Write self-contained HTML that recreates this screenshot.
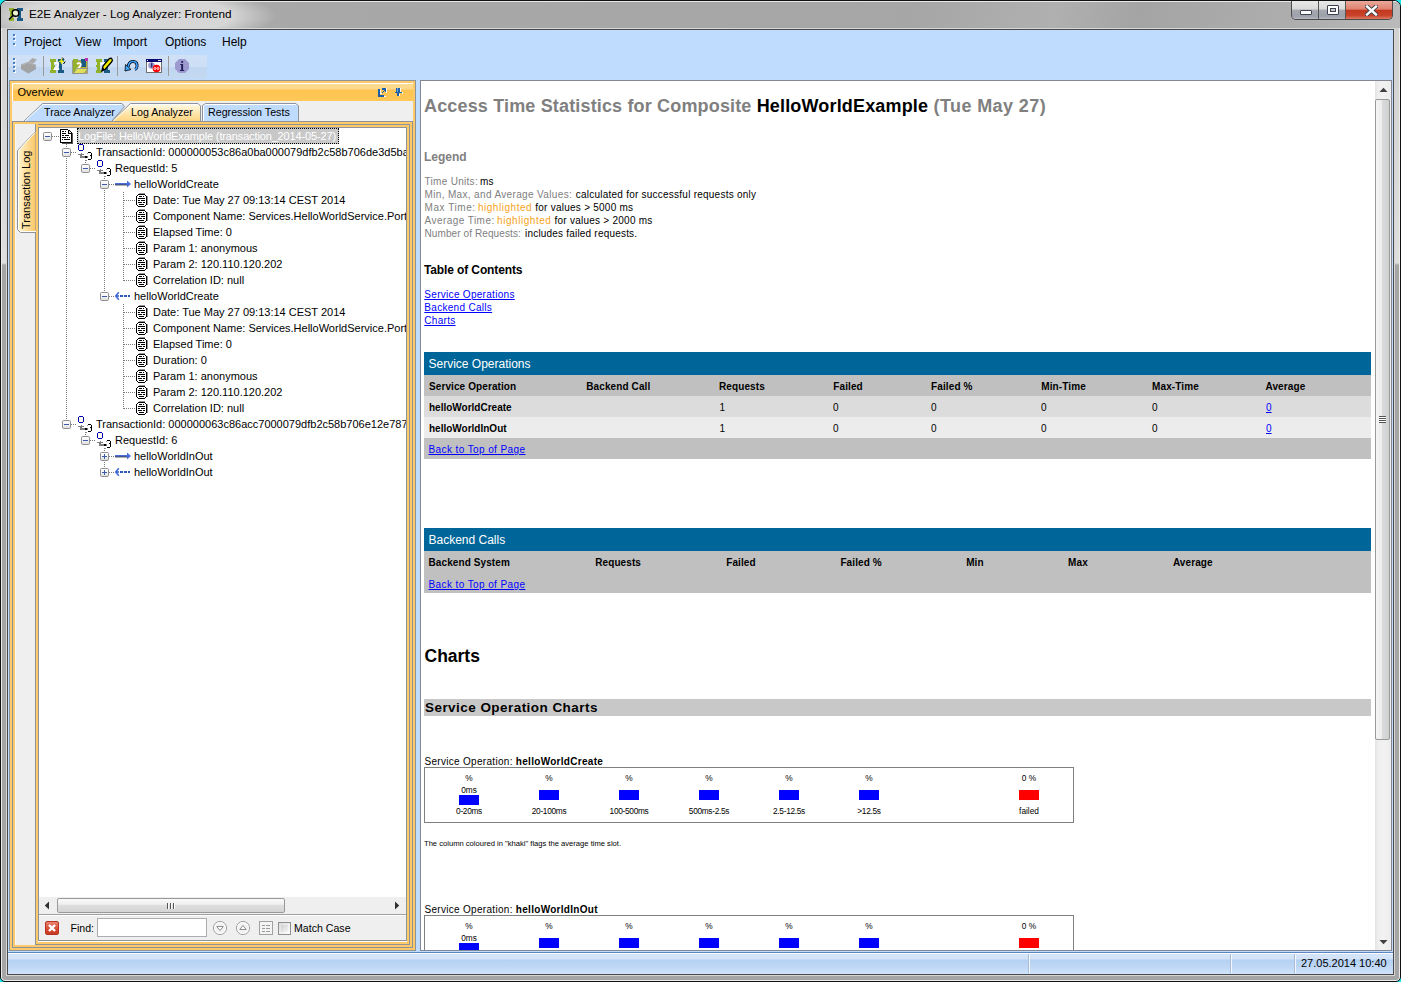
<!DOCTYPE html>
<html><head><meta charset="utf-8">
<style>
*{box-sizing:border-box}
html,body{margin:0;padding:0;width:1401px;height:982px;overflow:hidden;background:#19e3ea;font-family:"Liberation Sans",sans-serif}
.a{position:absolute}
.nw{white-space:nowrap}
#win{left:0;top:0;width:1401px;height:982px;border:1px solid #111;border-radius:7px 7px 5px 5px;box-shadow:inset 0 0 0 1px #ececec;
 background:linear-gradient(#cfcfcf 0,#d6d6d6 120px,#dedede 262px,#a5a5a5 264px,#a5a5a5 100%)}
#tbar{left:1px;top:1px;width:1399px;height:27px;border-radius:6px 6px 0 0;
 background:radial-gradient(ellipse 150px 30px at 125px 15px,#d8d8d8 0,#d6d6d6 70%,rgba(214,214,214,0) 100%),
 linear-gradient(100deg,#b0b0b0 0,#a8a8a8 300px,#a6a6a6 900px,#b0b0b0 1040px,#a4a4a4 1120px,#afafaf 1300px,#bdbdbd 1399px)}
#tbar:before{content:"";position:absolute;left:4px;top:0;right:4px;height:1px;background:#e8e8e8}
#ttxt{left:29px;top:7px;font-size:11.75px;color:#000}
#client{left:7px;top:29px;width:1387px;height:946px;border:1px solid #4a4a4a;background:#bfdbfe;box-shadow:0 0 0 1px #d6d6d6}
.menu{top:35px;font-size:12px;color:#000}
#status{left:8px;top:952px;width:1385px;height:22px;border-top:1px solid #5b86c2;
 background:linear-gradient(#fff 0,#fff 1px,#d5e4f8 1px,#d2e2f8 6px,#b4d0f3 7px,#c0d8f5 14px,#d0e3f9 21px)}
.ssep{top:954px;width:2px;height:19px;border-left:1px solid #a9bdd8;border-right:1px solid #f4f8fd}
#wbtn{left:1291px;top:1px;width:102px;height:19px;border:1px solid #4b4b4b;border-top:none;border-radius:0 0 5px 5px;overflow:hidden;background:#888}
.wb{top:0;height:18px}
.grip{width:2px;height:2px;background:#4b7fc4;box-shadow:1px 1px 0 #fff}
.og{background:#fdc969}
.tr{font-size:11px;line-height:16px;height:16px}
.gl{background:#8e939a}
</style></head><body>
<div id="win" class="a"></div>
<div id="tbar" class="a"></div>
<svg class="a" style="left:8px;top:7px" width="16" height="16" viewBox="0 0 16 16">
  <rect x="1" y="1" width="5" height="3" fill="#93b12a"/><rect x="2" y="4" width="3" height="8" fill="#93b12a"/><rect x="1" y="11" width="5" height="3" fill="#93b12a"/>
  <rect x="9" y="1" width="6" height="3" fill="#1e5a86"/><rect x="10" y="4" width="3" height="8" fill="#1e5a86"/><rect x="9" y="11" width="6" height="3" fill="#1e5a86"/>
  <circle cx="7.5" cy="6" r="3.3" fill="#e8f2d0" stroke="#000" stroke-width="1.4"/><line x1="5" y1="8.5" x2="1" y2="12.5" stroke="#000" stroke-width="1.5"/>
</svg>
<div id="ttxt" class="a nw">E2E Analyzer - Log Analyzer: Frontend</div>
<div id="wbtn" class="a">
  <div class="a wb" style="left:0;width:27px;border-right:1px solid #555;background:linear-gradient(#e9e9e9 0,#d9d9d9 45%,#a6a9b0 50%,#9da1a9 85%,#b7bac0 100%)"></div>
  <div class="a wb" style="left:27px;width:27px;border-right:1px solid #555;background:linear-gradient(#e9e9e9 0,#d9d9d9 45%,#a6a9b0 50%,#9da1a9 85%,#b7bac0 100%)"></div>
  <div class="a wb" style="left:54px;width:47px;background:linear-gradient(#eaa89a 0,#e0826e 45%,#c2391f 52%,#c9432a 80%,#df7a62 100%)"></div>
  <div class="a" style="left:8px;top:9px;width:12px;height:5px;border:1px solid #3c4150;background:#fff;border-radius:1px"></div>
  <div class="a" style="left:35px;top:4px;width:12px;height:10px;border:1px solid #3c4150;background:#fff;border-radius:1px"><div class="a" style="left:2px;top:2px;width:6px;height:4px;border:1px solid #3c4150;background:#c9c9c9"></div></div>
  <svg class="a" style="left:73px;top:4px" width="13" height="11" viewBox="0 0 13 11"><path d="M2 1.5 L11 9.5 M11 1.5 L2 9.5" stroke="#3a3f4a" stroke-width="4.2" stroke-linecap="square"/><path d="M2 1.5 L11 9.5 M11 1.5 L2 9.5" stroke="#fff" stroke-width="2.4" stroke-linecap="square"/></svg>
</div>
<div id="client" class="a"></div>
<!-- menubar -->
<div class="a grip" style="left:13px;top:34px"></div><div class="a grip" style="left:13px;top:38px"></div><div class="a grip" style="left:13px;top:43px"></div>
<div class="a menu nw" style="left:24px">Project</div>
<div class="a menu nw" style="left:75px">View</div>
<div class="a menu nw" style="left:113px">Import</div>
<div class="a menu nw" style="left:165px">Options</div>
<div class="a menu nw" style="left:222px">Help</div>
<!-- toolbar -->
<div class="a" style="left:8px;top:55px;width:199px;height:24px;background:linear-gradient(#d0e1f6 0,#cddff5 50%,#c1d6f0 52%,#c3d8f1 100%)"></div>
<svg class="a" style="left:8px;top:54px" width="200" height="26" viewBox="0 0 200 26">
  <!-- printer (disabled grey) -->
  <path d="M20.4 8 L24.3 4.1 L29 5.4 L25.7 9.2 Z" fill="#a9a9a9"/>
  <path d="M13 10.4 L20.4 7.7 L27.9 10.7 L27.9 13.9 L20.4 18.8 L13 13.9 Z" fill="#a3a3a3"/>
  <path d="M13 13.9 L20.4 18.8 L27.9 13.9 L27.9 15 L20.4 19.6 L13 15 Z" fill="#939393"/>
  <path d="M14 11 L20.4 8.7 L26.5 11" fill="none" stroke="#b8b8b8" stroke-width=".8"/>
  <rect x="35" y="2" width="1" height="20" fill="#9a9a9a"/>
  <!-- E2E new -->
  <g shape-rendering="crispEdges">
    <rect x="42" y="5" width="6" height="3" fill="#93b22c"/><rect x="43" y="8" width="3" height="9" fill="#93b22c"/><rect x="43" y="11" width="4" height="2" fill="#93b22c"/><rect x="42" y="16" width="6" height="3" fill="#93b22c"/>
    <rect x="50" y="5" width="6" height="3" fill="#1b5a82"/><rect x="51" y="8" width="3" height="9" fill="#1b5a82"/><rect x="50" y="16" width="6" height="3" fill="#1b5a82"/>
  </g>
  <path d="M46.3 9.8 Q48.5 7.8 50.2 9.6 Q50.8 11.2 48.8 13 L46.8 15.2 L51.2 15.2" fill="none" stroke="#fff" stroke-width="1.7"/>
  <path d="M53.5 4 L54.4 6.4 L56.8 7.3 L54.4 8.2 L53.5 10.6 L52.6 8.2 L50.2 7.3 L52.6 6.4 Z" fill="#f0ee00"/>
  <path d="M54.2 3.6 L56 5.5 M57.2 7.5 L55.5 10" fill="none" stroke="#000" stroke-width="1"/>
  <!-- E2E open: page x72-88 -->
  <g>
    <path d="M64.5 6.5 H79.5 V19.5 H64.5 Z" fill="#b8b030" stroke="#9a9a9a"/>
    <rect x="65" y="5" width="5" height="14" fill="#93b22c"/>
    <rect x="73" y="5" width="5" height="8" fill="#1b5a82"/>
    <path d="M69 10 Q70.5 8.5 72.5 9.5 Q73.5 11 71.5 13 L69.5 15 L73 15" fill="none" stroke="#fff" stroke-width="1.8"/>
    <path d="M65 19.5 L69 14.5 L80 14.5 L76 19.5 Z" fill="#e0e05a" stroke="#8a8a8a" stroke-width=".8"/>
    <rect x="77" y="4" width="3" height="3" fill="#c030b0"/>
  </g>
  <!-- E2E edit: page x96-111 -->
  <g>
    <rect x="88" y="5" width="6" height="3" fill="#93b22c"/><rect x="89" y="8" width="3" height="10" fill="#93b22c"/><rect x="88" y="11" width="4" height="2" fill="#93b22c"/><rect x="88" y="16" width="6" height="3" fill="#93b22c"/>
    <rect x="96" y="5" width="6" height="3" fill="#1b5a82"/><rect x="97" y="8" width="3" height="10" fill="#1b5a82"/><rect x="96" y="16" width="6" height="3" fill="#1b5a82"/>
    <path d="M92.5 10.5 Q94 8.5 96 9.5" fill="none" stroke="#fff" stroke-width="1.8"/>
    <path d="M94 17 L95 12 L101 5 Q103 3.5 104 5 Q105 6.5 103.5 8 L97.5 15 Z" fill="#f4ee00" stroke="#000" stroke-width="1.3"/>
    <path d="M94 17 L95.2 13.8 L96.8 15.4 Z" fill="#000"/>
  </g>
  <rect x="109" y="2" width="1" height="20" fill="#9a9a9a"/>
  <!-- undo: page x125-138 y61-71 -->
  <g>
    <path d="M120 13 Q121 7 125.5 7.5 Q129.5 8 129 12.5 Q128.5 15 127 15.5" fill="none" stroke="#000" stroke-width="3"/>
    <path d="M120 13 Q121 7 125.5 7.5 Q129.5 8 129 12.5 Q128.5 15 127 15.5" fill="none" stroke="#3aa0ff" stroke-width="1.6"/>
    <path d="M117 17 L117.5 10.5 L123 15.5 Z" fill="#3aa8ff" stroke="#000" stroke-width=".8"/>
  </g>
  <!-- window icon: page x146-162 y59-73 -->
  <g>
    <rect x="138.5" y="5.5" width="15" height="13" fill="#fff" stroke="#6e6e6e"/>
    <rect x="138" y="5" width="16" height="3" fill="#0a0a6e"/>
    <rect x="139" y="6" width="1" height="1" fill="#fff"/><rect x="150" y="6" width="3" height="1" fill="#ddd"/>
    <circle cx="143.5" cy="11.5" r="3.3" fill="#9a98cc"/><rect x="143" y="10" width="1.3" height="3.5" fill="#2a2a6e"/><rect x="143" y="8.7" width="1.3" height="1" fill="#2a2a6e"/>
    <circle cx="148.5" cy="14.5" r="3.8" fill="#ff0000"/><path d="M146 14.5 a1 1 0 1 0 2 0 a1 1 0 1 0 -2 0 M149 14.5 a1 1 0 1 0 2 0 a1 1 0 1 0 -2 0" fill="none" stroke="#fff" stroke-width=".9"/>
  </g>
  <rect x="160" y="2" width="1" height="20" fill="#9a9a9a"/>
  <!-- info octagon: page x175-189 y59-73 -->
  <g>
    <path d="M171 5 L177 5 L181 9 L181 15 L177 19 L171 19 L167 15 L167 9 Z" fill="#9d9ad0"/>
    <rect x="173.3" y="7" width="1.8" height="1.8" fill="#1e1e5a"/>
    <path d="M172.2 10 H175.1 V16 H176.2 V17 H172 V16 H173.2 V11 H172.2 Z" fill="#1e1e5a"/>
  </g>
</svg>
<div class="a grip" style="left:13px;top:58px"></div><div class="a grip" style="left:13px;top:62px"></div><div class="a grip" style="left:13px;top:66px"></div><div class="a grip" style="left:13px;top:70px"></div>

<!-- ===== Overview panel ===== -->
<div class="a" style="left:9px;top:80px;width:407px;height:871px;border:1px solid #8e939a;background:#fdc969"></div>
<div class="a" style="left:12px;top:83px;width:401px;height:18px;border-top:1px solid #fff;border-left:1px solid #fff;background:linear-gradient(#fedc94 0,#fed688 5px,#fec452 6px,#fec553 60%,#ffc858 100%)"></div>
<div class="a nw" style="left:17.5px;top:86px;font-size:11px;color:#000">Overview</div>
<svg class="a" style="left:376px;top:86px" width="12" height="12" viewBox="0 0 12 12" shape-rendering="crispEdges"><path d="M4 4h1v6h5v1h-5z" fill="#fff"/><path d="M2 3h2v8h-2z M2 9h6v2h-6z" fill="#1b5fa8"/><path d="M6 2h4v4h-1v-1h-1v1h-1v1h-1v-1h1v-1h1v-1h-2z" fill="#1b5fa8"/><path d="M10 2h1v5h-1z M5 7h1v1h-1z" fill="#fff"/></svg>
<svg class="a" style="left:394px;top:87px" width="10" height="10" viewBox="0 0 10 10" shape-rendering="crispEdges"><path d="M2 1h4v4h-4z M1 5h7v1h-7z M3 6h2v3h-2z" fill="#1b5fa8"/><path d="M3 1h1v4h-1z" fill="#7aa6dc"/><path d="M6 1h1v4h-1z M8 5h1v2h-1z M5 7h1v2h-1z" fill="#fff"/></svg>
<div class="a" style="left:12px;top:101px;width:401px;height:20px;background:#efefef"></div>
<!-- tab content border -->
<div class="a" style="left:12px;top:121px;width:401px;height:827px;border:1px solid #8e939a;background:#fdc969"></div>
<div class="a" style="left:15px;top:124px;width:20px;height:821px;background:#efefef;border-left:1px solid #f6f6f6"></div>
<!-- tree border -->
<div class="a" style="left:35px;top:124px;width:375px;height:821px;border:1px solid #8e939a;background:#fdc969"></div>
<div class="a" style="left:38px;top:127px;width:369px;height:814px;border:1px solid #8e939a;background:#fff"></div>
<div class="a" style="left:38px;top:941px;width:369px;height:1px;background:#fff"></div>
<!-- top tabs -->
<svg class="a" style="left:12px;top:100px" width="300" height="24" viewBox="0 0 300 24">
  <defs>
    <linearGradient id="tsel" x1="0" y1="0" x2="0" y2="1"><stop offset="0" stop-color="#fffbea"/><stop offset="1" stop-color="#fdd47c"/></linearGradient>
  </defs>
  <path d="M11.5 21.5 L30.5 3.5 L110 3.5 L112.5 6.5 L99.5 21.5 Z" fill="#bfdbfe" stroke="#8e939a" stroke-width="1"/>
  <path d="M13 21 L31 4.5 L109.5 4.5" fill="none" stroke="#fff" stroke-width="1"/>
  <path d="M190.5 21.5 L190.5 5.5 L193.5 3.5 L284 3.5 L286.5 6 L286.5 21.5 Z" fill="#bfdbfe" stroke="#8e939a" stroke-width="1"/>
  <path d="M191.5 21 L191.5 6 L194 4.5 L284 4.5" fill="none" stroke="#fff" stroke-width="1"/>
  <path d="M99.5 21.5 L118.5 3.5 L186 3.5 L188.5 6 L188.5 21.5 Z" fill="url(#tsel)" stroke="#8e939a" stroke-width="1"/>
  <path d="M101.5 21 L119 4.5 L186 4.5" fill="none" stroke="#fff" stroke-width="1"/>
</svg>
<div class="a nw" style="left:44px;top:106px;font-size:10.7px;color:#000">Trace Analyzer</div>
<div class="a nw" style="left:131px;top:106px;font-size:10.7px;color:#000">Log Analyzer</div>
<div class="a nw" style="left:208px;top:106px;font-size:10.7px;color:#000">Regression Tests</div>
<!-- side tab -->
<svg class="a" style="left:15px;top:124px" width="24" height="112" viewBox="0 0 24 112">
  <defs>
    <linearGradient id="sidet" x1="0" y1="0" x2="1" y2="0"><stop offset="0" stop-color="#fff6d2"/><stop offset="1" stop-color="#fcc664"/></linearGradient>
  </defs>
  <path d="M20.5 0 L20.5 7.5 L2.5 26.5 L2.5 105.5 L5.5 108.5 L21 108.5 L21 0 Z" fill="url(#sidet)" stroke="#8e939a" stroke-width="1"/>
  <path d="M20 8.5 L3.5 26.5 L3.5 105 L5.5 107.5 L21 107.5" fill="none" stroke="#fff" stroke-width="1"/>
  <rect x="21" y="0" width="2" height="109" fill="#fdc969"/>
</svg>
<div class="a nw" style="left:20px;top:229px;font-size:11px;color:#000;transform:rotate(-90deg);transform-origin:0 0">Transaction Log</div>
<!-- TREE -->
<div class="a" style="left:0;top:0;width:406px;height:897px;overflow:hidden">
<svg class="a" style="left:39px;top:128px" width="367" height="360" viewBox="0 0 367 360"><style>.dv{stroke:#7a7a7a;stroke-width:1;stroke-dasharray:1 1} .dh{stroke:#7a7a7a;stroke-width:1;stroke-dasharray:1 1}</style><defs>
<linearGradient id="expg" x1="0" y1="0" x2="0" y2="1"><stop offset="0" stop-color="#fff"/><stop offset=".5" stop-color="#f4f4f4"/><stop offset="1" stop-color="#dcdcdc"/></linearGradient>
<g id="expm"><rect x="0.5" y="0.5" width="8" height="8" rx="1.2" fill="url(#expg)" stroke="#8f8f8f"/><rect x="2" y="4" width="5" height="1" fill="#3b5aa8"/></g>
<g id="expp"><rect x="0.5" y="0.5" width="8" height="8" rx="1.2" fill="url(#expg)" stroke="#8f8f8f"/><rect x="2" y="4" width="5" height="1" fill="#3b5aa8"/><rect x="4" y="2" width="1" height="5" fill="#3b5aa8"/></g>
<g id="idoc" shape-rendering="crispEdges"><rect x="1" y="1" width="10" height="12" fill="#fff"/><path d="M0 0h8v1h-8z M0 1h1v13h-1z M1 13h11v1h-11z M11 5h1v8h-1z M8 1h1v4h-1z M8 4h3v1h-3z M9 1h1v1h-1z M10 2h1v1h-1z M11 3h1v2h-1z" fill="#000"/><rect x="9" y="2" width="1" height="2" fill="#ddd"/><path d="M12 4h1v11h-1z M2 14h10v1h-10z" fill="#555"/><path d="M2 2h2v1h-2z M5 2h1v1h-1z M2 4h4v1h-4z M2 6h2v1h-2z M5 6h4v1h-4z M2 8h4v1h-4z M7 8h1v1h-1z M9 8h1v1h-1z M2 10h1v1h-1z M4 10h6v1h-6z" fill="#000"/></g>
<g id="itx" shape-rendering="crispEdges"><path d="M1 0h4v1h-4z M0 1h1v5h-1z M5 1h1v5h-1z M1 6h4v1h-4z" fill="#0000b4"/><rect x="1" y="1" width="4" height="5" fill="#fffbe6"/><path d="M3 9h1v1h-1z M0 10h6v1h-6z M2 11h2v1h-2z M2 12h8v2h-8z" fill="#808080"/><rect x="7" y="12" width="2" height="2" fill="#000"/><path d="M10 8h3v1h-3z M13 9h1v6h-1z M12 11h1v1h-1z M10 15h3v1h-3z" fill="#000"/><path d="M9 9h1v1h-1z M8 16h1v1h-1z" fill="#999"/></g>
<g id="iright"><rect x="0" y="7" width="12" height="2" fill="#4a6fd8"/><rect x="0" y="8.6" width="12" height="0.8" fill="#333"/><path d="M12 4.5 L16 8 L12 11.5 Z" fill="#4a6fd8"/></g>
<g id="ileft"><path d="M3.8 4.2 L0.8 8 L3.8 11.8" fill="none" stroke="#4a6fd8" stroke-width="1.7"/><path d="M1 7.2h3v1.6h-3z" fill="#3a5fc8"/><rect x="5" y="7" width="3" height="2" fill="#2f55c0"/><rect x="9" y="7" width="3" height="2" fill="#2f55c0"/><rect x="13" y="7" width="2" height="2" fill="#2f55c0"/></g>
<g id="iitem" shape-rendering="crispEdges"><rect x="1" y="3" width="9" height="11" fill="#fff"/><path d="M3 1h6v1h-6z M11 4h1v9h-1z" fill="#999"/><path d="M2 2h7v1h-7z M1 3h1v1h-1z M9 3h1v1h-1z M0 4h1v9h-1z M10 4h1v9h-1z M1 13h1v1h-1z M9 13h1v1h-1z M2 14h7v1h-7z" fill="#000"/><path d="M3 4h3v1h-3z M7 4h1v1h-1z M2 6h7v1h-7z M2 8h2v1h-2z M5 8h4v1h-4z M2 10h4v1h-4z M7 10h2v1h-2z M3 12h5v1h-5z" fill="#000"/></g>
</defs><line x1="27.5" y1="16" x2="27.5" y2="297" class="dv"/><line x1="13" y1="8.5" x2="20" y2="8.5" class="dh"/><line x1="46.5" y1="32" x2="46.5" y2="41" class="dv"/><line x1="32" y1="24.5" x2="38" y2="24.5" class="dh"/><line x1="65.5" y1="48" x2="65.5" y2="169" class="dv"/><line x1="51" y1="40.5" x2="57" y2="40.5" class="dh"/><line x1="84.5" y1="64" x2="84.5" y2="153" class="dv"/><line x1="70" y1="56.5" x2="75" y2="56.5" class="dh"/><line x1="85" y1="72.5" x2="96" y2="72.5" class="dh"/><line x1="85" y1="88.5" x2="96" y2="88.5" class="dh"/><line x1="85" y1="104.5" x2="96" y2="104.5" class="dh"/><line x1="85" y1="120.5" x2="96" y2="120.5" class="dh"/><line x1="85" y1="136.5" x2="96" y2="136.5" class="dh"/><line x1="85" y1="152.5" x2="96" y2="152.5" class="dh"/><line x1="84.5" y1="176" x2="84.5" y2="281" class="dv"/><line x1="70" y1="168.5" x2="75" y2="168.5" class="dh"/><line x1="85" y1="184.5" x2="96" y2="184.5" class="dh"/><line x1="85" y1="200.5" x2="96" y2="200.5" class="dh"/><line x1="85" y1="216.5" x2="96" y2="216.5" class="dh"/><line x1="85" y1="232.5" x2="96" y2="232.5" class="dh"/><line x1="85" y1="248.5" x2="96" y2="248.5" class="dh"/><line x1="85" y1="264.5" x2="96" y2="264.5" class="dh"/><line x1="85" y1="280.5" x2="96" y2="280.5" class="dh"/><line x1="46.5" y1="304" x2="46.5" y2="313" class="dv"/><line x1="32" y1="296.5" x2="38" y2="296.5" class="dh"/><line x1="65.5" y1="320" x2="65.5" y2="345" class="dv"/><line x1="51" y1="312.5" x2="57" y2="312.5" class="dh"/><line x1="70" y1="328.5" x2="75" y2="328.5" class="dh"/><line x1="70" y1="344.5" x2="75" y2="344.5" class="dh"/><use href="#expm" x="4" y="4"/><use href="#idoc" x="21" y="1"/><use href="#expm" x="23" y="20"/><use href="#itx" x="39" y="16"/><use href="#expm" x="42" y="36"/><use href="#itx" x="58" y="32"/><use href="#expm" x="61" y="52"/><use href="#iright" x="76" y="48"/><use href="#iitem" x="97" y="64"/><use href="#iitem" x="97" y="80"/><use href="#iitem" x="97" y="96"/><use href="#iitem" x="97" y="112"/><use href="#iitem" x="97" y="128"/><use href="#iitem" x="97" y="144"/><use href="#expm" x="61" y="164"/><use href="#ileft" x="76" y="160"/><use href="#iitem" x="97" y="176"/><use href="#iitem" x="97" y="192"/><use href="#iitem" x="97" y="208"/><use href="#iitem" x="97" y="224"/><use href="#iitem" x="97" y="240"/><use href="#iitem" x="97" y="256"/><use href="#iitem" x="97" y="272"/><use href="#expm" x="23" y="292"/><use href="#itx" x="39" y="288"/><use href="#expm" x="42" y="308"/><use href="#itx" x="58" y="304"/><use href="#expp" x="61" y="324"/><use href="#iright" x="76" y="320"/><use href="#expp" x="61" y="340"/><use href="#ileft" x="76" y="336"/></svg>
<div class="a" style="left:77px;top:128px;width:262px;height:16px;background:#c8c8c8;border:1px dotted #000"></div>
<div class="a nw tr" style="left:78px;top:128px;color:#fff;letter-spacing:-0.14px;">LogFile: HelloWorldExample (transaction_2014-05-27)</div>
<div class="a nw tr" style="left:96px;top:144px;color:#000;">TransactionId: 000000053c86a0ba000079dfb2c58b706de3d5ba</div>
<div class="a nw tr" style="left:115px;top:160px;color:#000;">RequestId: 5</div>
<div class="a nw tr" style="left:134px;top:176px;color:#000;">helloWorldCreate</div>
<div class="a nw tr" style="left:153px;top:192px;color:#000;">Date: Tue May 27 09:13:14 CEST 2014</div>
<div class="a nw tr" style="left:153px;top:208px;color:#000;">Component Name: Services.HelloWorldService.Ports</div>
<div class="a nw tr" style="left:153px;top:224px;color:#000;">Elapsed Time: 0</div>
<div class="a nw tr" style="left:153px;top:240px;color:#000;">Param 1: anonymous</div>
<div class="a nw tr" style="left:153px;top:256px;color:#000;">Param 2: 120.110.120.202</div>
<div class="a nw tr" style="left:153px;top:272px;color:#000;">Correlation ID: null</div>
<div class="a nw tr" style="left:134px;top:288px;color:#000;">helloWorldCreate</div>
<div class="a nw tr" style="left:153px;top:304px;color:#000;">Date: Tue May 27 09:13:14 CEST 2014</div>
<div class="a nw tr" style="left:153px;top:320px;color:#000;">Component Name: Services.HelloWorldService.Ports</div>
<div class="a nw tr" style="left:153px;top:336px;color:#000;">Elapsed Time: 0</div>
<div class="a nw tr" style="left:153px;top:352px;color:#000;">Duration: 0</div>
<div class="a nw tr" style="left:153px;top:368px;color:#000;">Param 1: anonymous</div>
<div class="a nw tr" style="left:153px;top:384px;color:#000;">Param 2: 120.110.120.202</div>
<div class="a nw tr" style="left:153px;top:400px;color:#000;">Correlation ID: null</div>
<div class="a nw tr" style="left:96px;top:416px;color:#000;">TransactionId: 000000063c86acc7000079dfb2c58b706e12e787</div>
<div class="a nw tr" style="left:115px;top:432px;color:#000;">RequestId: 6</div>
<div class="a nw tr" style="left:134px;top:448px;color:#000;">helloWorldInOut</div>
<div class="a nw tr" style="left:134px;top:464px;color:#000;">helloWorldInOut</div>
</div>
<!-- /TREE -->
<!-- tree hscroll + find bar -->
<div class="a" style="left:39px;top:897px;width:367px;height:18px;background:#efefef;border-bottom:1px solid #a0a0a0"></div>
<svg class="a" style="left:44px;top:901px" width="6" height="9" viewBox="0 0 6 9"><path d="M5 0.5 L0.8 4.5 L5 8.5 Z" fill="#303030"/></svg>
<div class="a" style="left:57px;top:898px;width:228px;height:15px;border:1px solid #999;border-radius:2px;background:linear-gradient(#fafafa 0,#f0f0f0 40%,#dedede 50%,#d4d4d4 100%)"></div>
<div class="a" style="left:167px;top:903px;width:1px;height:6px;background:#555;box-shadow:1px 0 #fff,3px 0 #555,4px 0 #fff,6px 0 #555,7px 0 #fff"></div>
<svg class="a" style="left:394px;top:901px" width="6" height="9" viewBox="0 0 6 9"><path d="M1 0.5 L5.2 4.5 L1 8.5 Z" fill="#303030"/></svg>
<div class="a" style="left:39px;top:915px;width:367px;height:25px;background:#efefef;border-top:1px solid #fff"></div>
<div class="a" style="left:45px;top:921px;width:14px;height:14px;border-radius:2px;background:linear-gradient(#ec8370,#d64a33 60%,#c73a23);border:1px solid #b8321d"></div>
<svg class="a" style="left:45px;top:921px" width="14" height="14" viewBox="0 0 14 14"><path d="M4 4 L10 10 M10 4 L4 10" stroke="#fff" stroke-width="2.4"/></svg>
<div class="a nw" style="left:70.5px;top:922px;font-size:10.6px;color:#000">Find:</div>
<div class="a" style="left:97px;top:918px;width:110px;height:19px;background:#fff;border:1px solid #abadb3;border-top-color:#abadb3"></div>
<svg class="a" style="left:212px;top:920px" width="16" height="16" viewBox="0 0 16 16"><circle cx="8" cy="8" r="6.6" fill="#f2f2f2" stroke="#a2a2a2" stroke-width="1"/><circle cx="8" cy="8" r="5.4" fill="none" stroke="#fff" stroke-width=".8"/><path d="M4.8 6.5 H11.2 L8 10.5 Z" fill="#fff" stroke="#8e8e8e" stroke-width="1"/></svg>
<svg class="a" style="left:235px;top:920px" width="16" height="16" viewBox="0 0 16 16"><circle cx="8" cy="8" r="6.6" fill="#f2f2f2" stroke="#a2a2a2" stroke-width="1"/><circle cx="8" cy="8" r="5.4" fill="none" stroke="#fff" stroke-width=".8"/><path d="M4.8 9.5 H11.2 L8 5.5 Z" fill="#fff" stroke="#8e8e8e" stroke-width="1"/></svg>
<svg class="a" style="left:259px;top:921px" width="14" height="14" viewBox="0 0 14 14"><rect x="0.5" y="0.5" width="13" height="13" fill="#f4f4f4" stroke="#a0a0a0"/><path d="M3 4.5h3 M7 4.5h4 M3 7.5h3 M7 7.5h4 M3 10.5h3 M7 10.5h4" stroke="#9a9a9a" stroke-width="1"/></svg>
<div class="a" style="left:278px;top:922px;width:13px;height:13px;border:1px solid #8e8f8f;background:linear-gradient(135deg,#dcdcdc,#fff)"><div class="a" style="left:2px;top:2px;width:7px;height:7px;background:linear-gradient(135deg,#d0d0d0,#f4f4f4)"></div></div>
<div class="a nw" style="left:294px;top:922px;font-size:10.6px;color:#000">Match Case</div>
<!-- RIGHT -->
<div class="a" style="left:420px;top:80px;width:972px;height:871px;border:1px solid #828790;background:#fff"></div>
<!-- CONTENT -->
<div class="a" style="left:421px;top:81px;width:954px;height:869px;overflow:hidden;background:#fff">
<div class="a" style="left:-421px;top:-81px;width:1401px;height:982px">
<div class="a nw" style="left:424px;top:94.76px;font-size:18px;line-height:22px;letter-spacing:0.16px"><b style="color:#808080">Access Time Statistics for Composite </b><b style="color:#000">HelloWorldExample</b><b style="color:#808080;letter-spacing:0.4px"> (Tue May 27)</b></div>
<div class="a nw" style="left:424px;top:149.84px;font-size:12px;line-height:14px;color:#808080"><b>Legend</b></div>
<div class="a nw" style="left:424.5px;top:175.53px;font-size:10px;line-height:12px;letter-spacing:0.3px;color:#808080">Time Units: </div>
<div class="a nw" style="left:480px;top:175.53px;font-size:10px;line-height:12px;"><span style="color:#000;letter-spacing:0.28px">ms</span></div>
<div class="a nw" style="left:424.5px;top:188.53px;font-size:10px;line-height:12px;letter-spacing:0.35px;color:#808080">Min, Max, and Average Values: </div>
<div class="a nw" style="left:575.7px;top:188.53px;font-size:10px;line-height:12px;"><span style="color:#000;letter-spacing:0.24px">calculated for successful requests only</span></div>
<div class="a nw" style="left:424.5px;top:201.53px;font-size:10px;line-height:12px;letter-spacing:0.55px;color:#808080">Max Time: </div>
<div class="a nw" style="left:477.9px;top:201.53px;font-size:10px;line-height:12px;"><span style="color:#f5a31a;letter-spacing:0.54px">highlighted</span><span style="color:#000;letter-spacing:0.25px"> for values &gt; 5000 ms</span></div>
<div class="a nw" style="left:424.5px;top:214.53px;font-size:10px;line-height:12px;letter-spacing:0.45px;color:#808080">Average Time: </div>
<div class="a nw" style="left:497.1px;top:214.53px;font-size:10px;line-height:12px;"><span style="color:#f5a31a;letter-spacing:0.54px">highlighted</span><span style="color:#000;letter-spacing:0.25px"> for values &gt; 2000 ms</span></div>
<div class="a nw" style="left:424.5px;top:227.53px;font-size:10px;line-height:12px;letter-spacing:0.1px;color:#808080">Number of Requests: </div>
<div class="a nw" style="left:525px;top:227.53px;font-size:10px;line-height:12px;"><span style="color:#000;letter-spacing:0.2px">includes failed requests.</span></div>
<div class="a nw" style="left:424px;top:262.84px;font-size:12px;line-height:14px;letter-spacing:-0.12px;color:#000"><b>Table of Contents</b></div>
<div class="a nw" style="left:424.3px;top:288.54px;font-size:10px;line-height:12px;letter-spacing:0.3px;color:#0000ff;text-decoration:underline">Service Operations</div>
<div class="a nw" style="left:424.3px;top:301.54px;font-size:10px;line-height:12px;letter-spacing:0.3px;color:#0000ff;text-decoration:underline">Backend Calls</div>
<div class="a nw" style="left:424.3px;top:314.54px;font-size:10px;line-height:12px;letter-spacing:0.3px;color:#0000ff;text-decoration:underline">Charts</div>
<div class="a" style="left:424px;top:352px;width:947px;height:23px;background:#006699;"></div>
<div class="a nw" style="left:428.5px;top:356.84px;font-size:12px;line-height:14px;color:#fff">Service Operations</div>
<div class="a" style="left:424px;top:375px;width:947px;height:21px;background:#c0c0c0;"></div>
<div class="a" style="left:424px;top:396px;width:947px;height:21px;background:#dcdcdc;"></div>
<div class="a" style="left:424px;top:417px;width:947px;height:21px;background:#ececec;"></div>
<div class="a" style="left:424px;top:438px;width:947px;height:21px;background:#c0c0c0;"></div>
<div class="a nw" style="left:429px;top:380.54px;font-size:10px;line-height:12px;letter-spacing:0.1px;color:#000"><b>Service Operation</b></div>
<div class="a nw" style="left:586.3px;top:380.54px;font-size:10px;line-height:12px;letter-spacing:0.1px;color:#000"><b>Backend Call</b></div>
<div class="a nw" style="left:719px;top:380.54px;font-size:10px;line-height:12px;letter-spacing:0.1px;color:#000"><b>Requests</b></div>
<div class="a nw" style="left:833.3px;top:380.54px;font-size:10px;line-height:12px;letter-spacing:0.1px;color:#000"><b>Failed</b></div>
<div class="a nw" style="left:931.1px;top:380.54px;font-size:10px;line-height:12px;letter-spacing:0.1px;color:#000"><b>Failed %</b></div>
<div class="a nw" style="left:1041.3px;top:380.54px;font-size:10px;line-height:12px;letter-spacing:0.1px;color:#000"><b>Min-Time</b></div>
<div class="a nw" style="left:1152.1px;top:380.54px;font-size:10px;line-height:12px;letter-spacing:0.1px;color:#000"><b>Max-Time</b></div>
<div class="a nw" style="left:1265.5px;top:380.54px;font-size:10px;line-height:12px;letter-spacing:0.1px;color:#000"><b>Average</b></div>
<div class="a nw" style="left:429px;top:401.54px;font-size:10px;line-height:12px;color:#000"><b>helloWorldCreate</b></div>
<div class="a nw" style="left:719.5px;top:401.54px;font-size:10px;line-height:12px;color:#000">1</div>
<div class="a nw" style="left:833px;top:401.54px;font-size:10px;line-height:12px;color:#000">0</div>
<div class="a nw" style="left:931px;top:401.54px;font-size:10px;line-height:12px;color:#000">0</div>
<div class="a nw" style="left:1041px;top:401.54px;font-size:10px;line-height:12px;color:#000">0</div>
<div class="a nw" style="left:1152px;top:401.54px;font-size:10px;line-height:12px;color:#000">0</div>
<div class="a nw" style="left:1266px;top:401.54px;font-size:10px;line-height:12px;color:#0000ff;text-decoration:underline">0</div>
<div class="a nw" style="left:429px;top:422.54px;font-size:10px;line-height:12px;color:#000"><b>helloWorldInOut</b></div>
<div class="a nw" style="left:719.5px;top:422.54px;font-size:10px;line-height:12px;color:#000">1</div>
<div class="a nw" style="left:833px;top:422.54px;font-size:10px;line-height:12px;color:#000">0</div>
<div class="a nw" style="left:931px;top:422.54px;font-size:10px;line-height:12px;color:#000">0</div>
<div class="a nw" style="left:1041px;top:422.54px;font-size:10px;line-height:12px;color:#000">0</div>
<div class="a nw" style="left:1152px;top:422.54px;font-size:10px;line-height:12px;color:#000">0</div>
<div class="a nw" style="left:1266px;top:422.54px;font-size:10px;line-height:12px;color:#0000ff;text-decoration:underline">0</div>
<div class="a nw" style="left:428.5px;top:444.04px;font-size:10px;line-height:12px;letter-spacing:0.4px;color:#0000ff;text-decoration:underline">Back to Top of Page</div>
<div class="a" style="left:424px;top:528px;width:947px;height:23px;background:#006699;"></div>
<div class="a nw" style="left:428.5px;top:532.84px;font-size:12px;line-height:14px;color:#fff">Backend Calls</div>
<div class="a" style="left:424px;top:551px;width:947px;height:21px;background:#c0c0c0;"></div>
<div class="a" style="left:424px;top:572px;width:947px;height:21px;background:#c0c0c0;"></div>
<div class="a nw" style="left:428.5px;top:556.53px;font-size:10px;line-height:12px;letter-spacing:0.1px;color:#000"><b>Backend System</b></div>
<div class="a nw" style="left:595.2px;top:556.53px;font-size:10px;line-height:12px;letter-spacing:0.1px;color:#000"><b>Requests</b></div>
<div class="a nw" style="left:726.2px;top:556.53px;font-size:10px;line-height:12px;letter-spacing:0.1px;color:#000"><b>Failed</b></div>
<div class="a nw" style="left:840.4px;top:556.53px;font-size:10px;line-height:12px;letter-spacing:0.1px;color:#000"><b>Failed %</b></div>
<div class="a nw" style="left:966.2px;top:556.53px;font-size:10px;line-height:12px;letter-spacing:0.1px;color:#000"><b>Min</b></div>
<div class="a nw" style="left:1068.1px;top:556.53px;font-size:10px;line-height:12px;letter-spacing:0.1px;color:#000"><b>Max</b></div>
<div class="a nw" style="left:1172.9px;top:556.53px;font-size:10px;line-height:12px;letter-spacing:0.1px;color:#000"><b>Average</b></div>
<div class="a nw" style="left:428.5px;top:579.03px;font-size:10px;line-height:12px;letter-spacing:0.4px;color:#0000ff;text-decoration:underline">Back to Top of Page</div>
<div class="a nw" style="left:424.5px;top:646.44px;font-size:17.5px;line-height:21px;color:#000"><b>Charts</b></div>
<div class="a" style="left:424px;top:699px;width:947px;height:17px;background:#c8c8c8;"></div>
<div class="a nw" style="left:425px;top:699.82px;font-size:13.5px;line-height:16px;letter-spacing:0.45px;color:#000"><b>Service Operation Charts</b></div>
<div class="a nw" style="left:424.5px;top:755.53px;font-size:10px;line-height:12px;letter-spacing:0.3px;color:#000">Service Operation: <b>helloWorldCreate</b></div>
<div class="a" style="left:424px;top:767px;width:650px;height:56px;border:1px solid #808080"></div>
<div class="a nw" style="left:429px;top:774px;width:80px;text-align:center;font-size:8.3px;line-height:9px;color:#000">%</div>
<div class="a nw" style="left:429px;top:786px;width:80px;text-align:center;font-size:8.3px;line-height:9px;color:#000;letter-spacing:-0.1px">0ms</div>
<div class="a" style="left:459px;top:795px;width:20px;height:10px;background:#0000ff;"></div>
<div class="a nw" style="left:429px;top:807px;width:80px;text-align:center;font-size:8.3px;line-height:9px;color:#000;letter-spacing:-0.3px">0-20ms</div>
<div class="a nw" style="left:509px;top:774px;width:80px;text-align:center;font-size:8.3px;line-height:9px;color:#000">%</div>
<div class="a" style="left:539px;top:790px;width:20px;height:10px;background:#0000ff;"></div>
<div class="a nw" style="left:509px;top:807px;width:80px;text-align:center;font-size:8.3px;line-height:9px;color:#000;letter-spacing:-0.3px">20-100ms</div>
<div class="a nw" style="left:589px;top:774px;width:80px;text-align:center;font-size:8.3px;line-height:9px;color:#000">%</div>
<div class="a" style="left:619px;top:790px;width:20px;height:10px;background:#0000ff;"></div>
<div class="a nw" style="left:589px;top:807px;width:80px;text-align:center;font-size:8.3px;line-height:9px;color:#000;letter-spacing:-0.3px">100-500ms</div>
<div class="a nw" style="left:669px;top:774px;width:80px;text-align:center;font-size:8.3px;line-height:9px;color:#000">%</div>
<div class="a" style="left:699px;top:790px;width:20px;height:10px;background:#0000ff;"></div>
<div class="a nw" style="left:669px;top:807px;width:80px;text-align:center;font-size:8.3px;line-height:9px;color:#000;letter-spacing:-0.3px">500ms-2.5s</div>
<div class="a nw" style="left:749px;top:774px;width:80px;text-align:center;font-size:8.3px;line-height:9px;color:#000">%</div>
<div class="a" style="left:779px;top:790px;width:20px;height:10px;background:#0000ff;"></div>
<div class="a nw" style="left:749px;top:807px;width:80px;text-align:center;font-size:8.3px;line-height:9px;color:#000;letter-spacing:-0.3px">2.5-12.5s</div>
<div class="a nw" style="left:829px;top:774px;width:80px;text-align:center;font-size:8.3px;line-height:9px;color:#000">%</div>
<div class="a" style="left:859px;top:790px;width:20px;height:10px;background:#0000ff;"></div>
<div class="a nw" style="left:829px;top:807px;width:80px;text-align:center;font-size:8.3px;line-height:9px;color:#000;letter-spacing:-0.3px">&gt;12.5s</div>
<div class="a nw" style="left:989px;top:774px;width:80px;text-align:center;font-size:8.3px;line-height:9px;color:#000">0 %</div>
<div class="a" style="left:1019px;top:790px;width:20px;height:10px;background:#ff0000;"></div>
<div class="a nw" style="left:989px;top:807px;width:80px;text-align:center;font-size:8.3px;line-height:9px;color:#000">failed</div>
<div class="a nw" style="left:424px;top:839.17px;font-size:7.6px;line-height:9px;color:#000">The column coloured in "khaki" flags the average time slot.</div>
<div class="a nw" style="left:424.5px;top:903.53px;font-size:10px;line-height:12px;letter-spacing:0.3px;color:#000">Service Operation: <b>helloWorldInOut</b></div>
<div class="a" style="left:424px;top:915px;width:650px;height:56px;border:1px solid #808080"></div>
<div class="a nw" style="left:429px;top:922px;width:80px;text-align:center;font-size:8.3px;line-height:9px;color:#000">%</div>
<div class="a nw" style="left:429px;top:934px;width:80px;text-align:center;font-size:8.3px;line-height:9px;color:#000;letter-spacing:-0.1px">0ms</div>
<div class="a" style="left:459px;top:943px;width:20px;height:10px;background:#0000ff;"></div>
<div class="a nw" style="left:429px;top:955px;width:80px;text-align:center;font-size:8.3px;line-height:9px;color:#000;letter-spacing:-0.3px">0-20ms</div>
<div class="a nw" style="left:509px;top:922px;width:80px;text-align:center;font-size:8.3px;line-height:9px;color:#000">%</div>
<div class="a" style="left:539px;top:938px;width:20px;height:10px;background:#0000ff;"></div>
<div class="a nw" style="left:509px;top:955px;width:80px;text-align:center;font-size:8.3px;line-height:9px;color:#000;letter-spacing:-0.3px">20-100ms</div>
<div class="a nw" style="left:589px;top:922px;width:80px;text-align:center;font-size:8.3px;line-height:9px;color:#000">%</div>
<div class="a" style="left:619px;top:938px;width:20px;height:10px;background:#0000ff;"></div>
<div class="a nw" style="left:589px;top:955px;width:80px;text-align:center;font-size:8.3px;line-height:9px;color:#000;letter-spacing:-0.3px">100-500ms</div>
<div class="a nw" style="left:669px;top:922px;width:80px;text-align:center;font-size:8.3px;line-height:9px;color:#000">%</div>
<div class="a" style="left:699px;top:938px;width:20px;height:10px;background:#0000ff;"></div>
<div class="a nw" style="left:669px;top:955px;width:80px;text-align:center;font-size:8.3px;line-height:9px;color:#000;letter-spacing:-0.3px">500ms-2.5s</div>
<div class="a nw" style="left:749px;top:922px;width:80px;text-align:center;font-size:8.3px;line-height:9px;color:#000">%</div>
<div class="a" style="left:779px;top:938px;width:20px;height:10px;background:#0000ff;"></div>
<div class="a nw" style="left:749px;top:955px;width:80px;text-align:center;font-size:8.3px;line-height:9px;color:#000;letter-spacing:-0.3px">2.5-12.5s</div>
<div class="a nw" style="left:829px;top:922px;width:80px;text-align:center;font-size:8.3px;line-height:9px;color:#000">%</div>
<div class="a" style="left:859px;top:938px;width:20px;height:10px;background:#0000ff;"></div>
<div class="a nw" style="left:829px;top:955px;width:80px;text-align:center;font-size:8.3px;line-height:9px;color:#000;letter-spacing:-0.3px">&gt;12.5s</div>
<div class="a nw" style="left:989px;top:922px;width:80px;text-align:center;font-size:8.3px;line-height:9px;color:#000">0 %</div>
<div class="a" style="left:1019px;top:938px;width:20px;height:10px;background:#ff0000;"></div>
<div class="a nw" style="left:989px;top:955px;width:80px;text-align:center;font-size:8.3px;line-height:9px;color:#000">failed</div>
</div></div>
<!-- /CONTENT -->
<!-- vscroll -->
<div class="a" style="left:1375px;top:81px;width:16px;height:869px;background:linear-gradient(90deg,#e3e3e3 0,#eeeeee 3px,#f2f2f2 8px,#ececec 16px)"></div>
<svg class="a" style="left:1379px;top:87px" width="9" height="6" viewBox="0 0 9 6"><path d="M0.5 5 L4.5 0.8 L8.5 5 Z" fill="#404040"/></svg>
<div class="a" style="left:1375px;top:99px;width:15px;height:641px;border:1px solid #9a9a9a;border-radius:2px;background:linear-gradient(90deg,#f5f5f5 0,#ececec 45%,#d9dadc 50%,#cfd0d2 100%)"></div>
<div class="a" style="left:1379px;top:416px;width:7px;height:1px;background:#555;box-shadow:0 1px #fff,0 2px #555,0 3px #fff,0 4px #555,0 5px #fff,0 6px #555"></div>
<svg class="a" style="left:1379px;top:939px" width="9" height="6" viewBox="0 0 9 6"><path d="M0.5 1 L4.5 5.2 L8.5 1 Z" fill="#404040"/></svg>
<!-- /RIGHT -->
<!-- status -->
<div id="status" class="a"></div>
<div class="a ssep" style="left:1028px"></div>
<div class="a ssep" style="left:1230px"></div>
<div class="a ssep" style="left:1294px"></div>
<div class="a nw" style="left:1301px;top:957px;font-size:11px;color:#000">27.05.2014 10:40</div>
</body></html>
